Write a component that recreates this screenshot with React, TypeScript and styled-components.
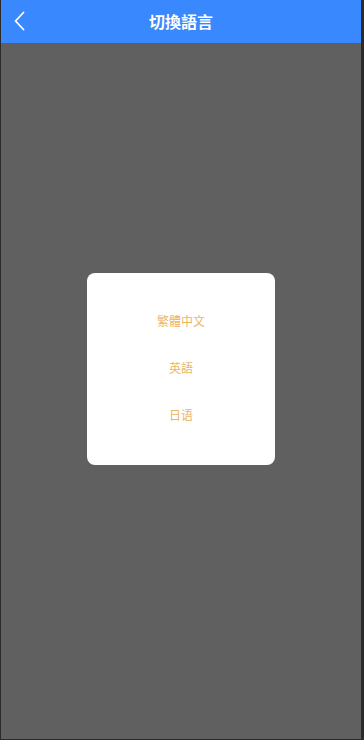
import React, { useState } from 'react';
import styled, { createGlobalStyle } from 'styled-components';

const GlobalStyle = createGlobalStyle`
  html, body {
    margin: 0;
    padding: 0;
    background: #2b2b2b;
    font-family: "Noto Sans CJK SC", "Noto Sans", sans-serif;
  }
`;

export const Frame = styled.div`
  position: relative;
  width: 360px;
  height: 739px;
  margin-left: 1px;
  background: #606060;
  overflow: hidden;
`;

export const Header = styled.div`
  height: 43px;
  background: #3a88fe;
  display: flex;
  align-items: center;
  justify-content: center;
  position: relative;
`;

export const Title = styled.div`
  color: #ffffff;
  font-size: 16px;
  font-weight: 700;
  line-height: 43px;
`;

export const BackButton = styled.button`
  position: absolute;
  left: 5px;
  top: 8px;
  width: 26px;
  height: 26px;
  padding: 0;
  border: none;
  background: transparent;
  display: flex;
  align-items: center;
  justify-content: center;
  cursor: pointer;
`;

export const Overlay = styled.div`
  position: absolute;
  inset: 0;
  display: flex;
  align-items: center;
  justify-content: center;
`;

export const Dialog = styled.div`
  width: 188px;
  padding: 24px 0 27px;
  background: #ffffff;
  border-radius: 8px;
  display: flex;
  flex-direction: column;
  margin-top: -1px;
`;

export const Option = styled.div<{ $active?: boolean }>`
  height: 47px;
  line-height: 47px;
  text-align: center;
  font-size: 12px;
  color: ${(p) => (p.$active ? '#e0952e' : '#ebb566')};
  cursor: pointer;
`;

const languages = ['繁體中文', '英語', '日语'];

export default function App() {
  const [selected, setSelected] = useState<string>();

  return (
    <>
      <GlobalStyle />
      <Frame>
        <Header>
          <BackButton aria-label="back">
            <svg width="14" height="20" viewBox="0 0 14 20" fill="none">
              <path d="M11.5 1.5 L3.5 10 L11.5 18.5" stroke="#ffffff" strokeWidth="1.8" strokeLinecap="round" strokeLinejoin="round" />
            </svg>
          </BackButton>
          <Title>切換語言</Title>
        </Header>
        <Overlay>
          <Dialog>
            {languages.map((lang) => (
              <Option key={lang} $active={selected === lang} onClick={() => setSelected(lang)}>
                {lang}
              </Option>
            ))}
          </Dialog>
        </Overlay>
      </Frame>
    </>
  );
}
